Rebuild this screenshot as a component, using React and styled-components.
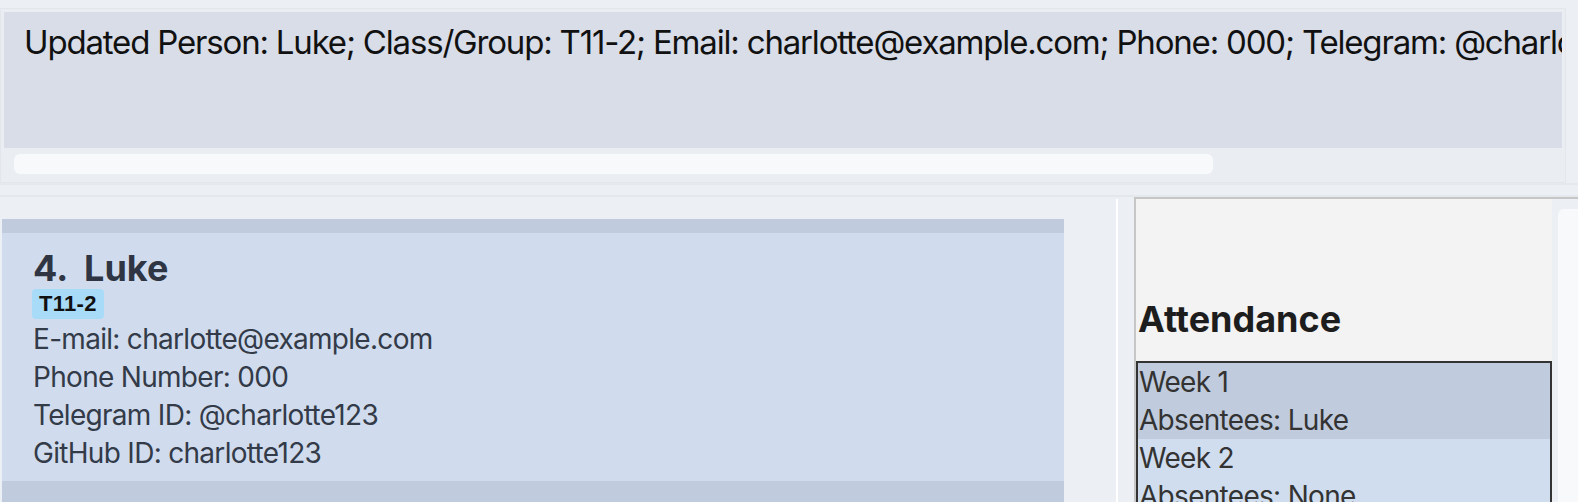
import React from "react";
import styled, { createGlobalStyle } from "styled-components";

const Global = createGlobalStyle`
  html, body { margin: 0; padding: 0; background: #eceff4; overflow: hidden; }
  body { width: 1578px; height: 502px; font-family: Inter, "Noto Sans", sans-serif; }
`;

const Page = styled.div`
  width: 1578px;
  height: 502px;
  display: flex;
  flex-direction: column;
  background: #eceff4;
  overflow: hidden;
`;

const ResultFrame = styled.div`
  margin-top: 8px;
  width: 1566px;
  height: 175px;
  flex-shrink: 0;
  box-sizing: border-box;
  background: #eaedf2;
  border: 1px solid #e3e6eb;
  padding: 3px;
  display: flex;
  flex-direction: column;
`;

const ResultText = styled.div`
  height: 136px;
  flex-shrink: 0;
  background: #d8dde8;
  box-sizing: border-box;
  padding: 10px 0 0 20px;
  font-size: 33px;
  line-height: 40px;
  letter-spacing: -1.18px;
  color: #111;
  white-space: nowrap;
  overflow: hidden;
`;

const HScroll = styled.div`
  margin: 6px 0 0 10px;
  width: 1199px;
  height: 20px;
  border-radius: 6px;
  background: #f8f9fb;
`;

const Separator = styled.div`
  height: 14px;
  flex-shrink: 0;
  border-top: 2px solid #e5e8ed;
  border-bottom: 2px solid #e4e7ec;
  box-sizing: border-box;
`;

const Split = styled.div`
  flex: 1;
  display: flex;
  min-height: 0;
`;

const ListPane = styled.div`
  width: 1116px;
  padding: 22px 0 0 2px;
  box-sizing: border-box;
  overflow: hidden;
`;

const Divider = styled.div`
  width: 2px;
  background: #ffffff;
  margin-top: 2px;
`;

const Gap = styled.div`
  width: 16px;
`;

const Cell = styled.div`
  width: 1062px;
  background: #c0cbdd;
  padding: 14px 0 12px;
`;

const Card = styled.div`
  background: #d0dcee;
  padding: 15px 0 9px 31px;
  min-height: ${(p) => (p.$empty ? "200px" : "0")};
  display: flex;
  flex-direction: column;
  align-items: flex-start;
  color: #333a48;
`;

const Name = styled.div`
  font-size: 36px;
  line-height: 40px;
  font-weight: 700;
  color: #2f3542;
  white-space: pre;
`;

const Tag = styled.span`
  margin: 1px 0 0 -1px;
  background: #a8dbf8;
  color: #111;
  border-radius: 4px;
  height: 30px;
  padding: 0 7px;
  display: flex;
  align-items: center;
  font-family: "Liberation Sans", Arial, sans-serif;
  font-weight: 700;
  font-size: 22px;
  letter-spacing: 0.3px;
`;

const Details = styled.div`
  margin-top: 1px;
  display: flex;
  flex-direction: column;
`;

const Detail = styled.div`
  font-size: 28px;
  line-height: 38px;
  letter-spacing: -0.7px;
`;

const SidePane = styled.div`
  width: 418px;
  box-sizing: border-box;
  border-top: 2px solid #c6c6c6;
  border-left: 2px solid #c6c6c6;
  background: #f3f3f3;
  display: flex;
  flex-direction: column;
  overflow: hidden;
`;

const SideHead = styled.div`
  flex-shrink: 0;
  padding: 98px 0 0 2px;
  height: 162px;
  box-sizing: border-box;
  font-size: 36px;
  line-height: 44px;
  font-weight: 700;
  color: #1d1d1d;
`;

const AttList = styled.div`
  flex-shrink: 0;
  border: 2px solid #333;
  border-bottom: none;
  background: #d0ddef;
`;

const AttRow = styled.div`
  background: ${(p) => (p.$selected ? "#c0cbdd" : "#d0ddef")};
  padding: 0 0 0 1px;
  display: flex;
  flex-direction: column;
  font-size: 28px;
  line-height: 38px;
  letter-spacing: -0.7px;
  color: #333;
`;

const ScrollCol = styled.div`
  flex: 1;
  display: flex;
  flex-direction: column;
  border-top: 2px solid #c6c6c6;
  padding: 10px 0 0 6px;
`;

const VThumb = styled.div`
  flex: 1;
  background: #f8f9fb;
  border-radius: 6px 0 0 0;
`;

const details = [
  "E-mail: charlotte@example.com",
  "Phone Number: 000",
  "Telegram ID: @charlotte123",
  "GitHub ID: charlotte123",
];

const weeks = [
  { week: "Week 1", abs: "Absentees: Luke", sel: true },
  { week: "Week 2", abs: "Absentees: None", sel: false },
];

export default function App() {
  return (
    <Page>
      <Global />
      <ResultFrame>
        <ResultText>
          Updated Person: Luke; Class/Group: T11-2; Email: charlotte@example.com; Phone: 000; Telegram: @charlotte123; GitHub: charlotte123
        </ResultText>
        <HScroll />
      </ResultFrame>
      <Separator />
      <Split>
        <ListPane>
          <Cell>
            <Card>
              <Name>{"4.  Luke"}</Name>
              <Tag>T11-2</Tag>
              <Details>
                {details.map((d) => (
                  <Detail key={d}>{d}</Detail>
                ))}
              </Details>
            </Card>
          </Cell>
          <Cell>
            <Card $empty />
          </Cell>
        </ListPane>
        <Divider />
        <Gap />
        <SidePane>
          <SideHead>Attendance</SideHead>
          <AttList>
            {weeks.map((w) => (
              <AttRow key={w.week} $selected={w.sel}>
                <span>{w.week}</span>
                <span>{w.abs}</span>
              </AttRow>
            ))}
          </AttList>
        </SidePane>
        <ScrollCol>
          <VThumb />
        </ScrollCol>
      </Split>
    </Page>
  );
}
